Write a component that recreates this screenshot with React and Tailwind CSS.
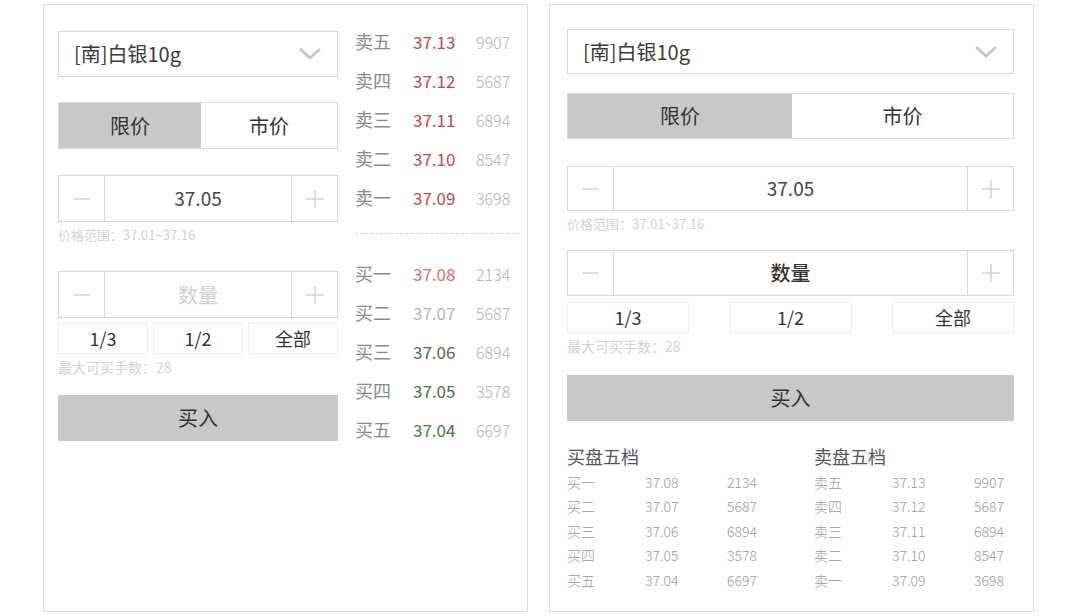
const sells = [
  ["卖五", "37.13", "9907"],
  ["卖四", "37.12", "5687"],
  ["卖三", "37.11", "6894"],
  ["卖二", "37.10", "8547"],
  ["卖一", "37.09", "3698"],
];

const buys = [
  ["买一", "37.08", "2134", "text-[#e06a6a]"],
  ["买二", "37.07", "5687", "text-[#b5b5b5]"],
  ["买三", "37.06", "6894", "text-[#4d6a4f]"],
  ["买四", "37.05", "3578", "text-[#46704c]"],
  ["买五", "37.04", "6697", "text-[#4f7a3c]"],
];

const Chevron = () => (
  <svg width="22" height="12" viewBox="0 0 22 12" fill="none">
    <polyline points="1,1 11,10 21,1" stroke="#c4c4c4" strokeWidth="2.6" />
  </svg>
);

const Minus = () => (
  <svg width="16" height="16" viewBox="0 0 16 16">
    <line x1="0" y1="8" x2="16" y2="8" stroke="#c8c8c8" strokeWidth="1.2" />
  </svg>
);

const Plus = () => (
  <svg width="18" height="18" viewBox="0 0 18 18">
    <line x1="0" y1="9" x2="18" y2="9" stroke="#c8c8c8" strokeWidth="1.2" />
    <line x1="9" y1="0" x2="9" y2="18" stroke="#c8c8c8" strokeWidth="1.2" />
  </svg>
);

const Select = ({ h }) => (
  <div className={`flex items-center justify-between border border-[#d8d8d8] pl-[15px] pr-[16px] ${h}`}>
    <span className="text-[20px] text-[#3a3a3a]">[南]白银10g</span>
    <Chevron />
  </div>
);

const Tabs = ({ h, split }) => (
  <div className={`flex border border-[#d8d8d8] ${h}`}>
    <div className={`flex items-center justify-center bg-[#c8c8c8] text-[20px] text-[#333] ${split}`}>限价</div>
    <div className="flex flex-1 items-center justify-center text-[20px] text-[#333]">市价</div>
  </div>
);

const Stepper = ({ h, children }) => (
  <div className={`flex border border-[#d8d8d8] ${h}`}>
    <div className="flex w-[46px] items-center justify-center border-r border-[#d8d8d8]">
      <Minus />
    </div>
    <div className="flex flex-1 items-center justify-center">{children}</div>
    <div className="flex w-[46px] items-center justify-center border-l border-[#d8d8d8]">
      <Plus />
    </div>
  </div>
);

const Fractions = ({ cls }) => (
  <div className="flex justify-between">
    {["1/3", "1/2", "全部"].map((t) => (
      <div key={t} className={`flex h-[31px] items-center justify-center border border-[#f0f0f0] text-[18px] text-[#333] ${cls}`}>
        {t}
      </div>
    ))}
  </div>
);

export default function App() {
  return (
    <div className="flex h-[616px] w-[1080px] gap-[21px] bg-white pl-[43px] pt-[4px] font-['Noto_Sans_CJK_SC',sans-serif]">
      {/* 左侧面板 */}
      <div className="flex h-[608px] w-[485px] border border-[#dcdcdc] pl-[14px]">
        <div className="flex w-[280px] flex-col pt-[26px]">
          <Select h="h-[46px]" />
          <div className="mt-[25px]">
            <Tabs h="h-[47px]" split="w-[142px]" />
          </div>
          <div className="mt-[26px]">
            <Stepper h="h-[47px]">
              <span className="text-[19px] text-[#444]">37.05</span>
            </Stepper>
          </div>
          <div className="mt-[3px] text-[13px] leading-[20px] text-[#d2d2d2]">价格范围：37.01~37.16</div>
          <div className="mt-[26px]">
            <Stepper h="h-[47px]">
              <span className="text-[20px] text-[#cfcfcf]">数量</span>
            </Stepper>
          </div>
          <div className="mt-[5px]">
            <Fractions cls="w-[90px]" />
          </div>
          <div className="mt-[3px] text-[14px] leading-[20px] text-[#d2d2d2]">最大可买手数：28</div>
          <div className="mt-[18px] flex h-[46px] items-center justify-center bg-[#c8c8c8] text-[20px] text-[#333]">买入</div>
        </div>

        {/* 五档 */}
        <div className="ml-[17px] flex w-[164px] flex-col pt-[17px]">
          {sells.map(([l, p, v]) => (
            <div key={l} className="flex h-[39px] items-center">
              <span className="w-[58px] text-[18px] text-[#8a8a8a]">{l}</span>
              <span className="w-[63px] text-[17px] text-[#bf4747]">{p}</span>
              <span className="text-[16px] font-light text-[#b0b0b0]">{v}</span>
            </div>
          ))}
          <div className="mt-[16px] border-t border-dashed border-[#d0d0d0]" />
          <div className="mt-[20px]">
            {buys.map(([l, p, v, c]) => (
              <div key={l} className="flex h-[39px] items-center">
                <span className="w-[58px] text-[18px] text-[#8a8a8a]">{l}</span>
                <span className={`w-[63px] text-[17px] ${c}`}>{p}</span>
                <span className="text-[16px] font-light text-[#b0b0b0]">{v}</span>
              </div>
            ))}
          </div>
        </div>
      </div>

      {/* 右侧面板 */}
      <div className="flex h-[608px] w-[485px] flex-col border border-[#dcdcdc] pl-[17px] pr-[19px] pt-[24px]">
        <Select h="h-[45px]" />
        <div className="mt-[19px]">
          <Tabs h="h-[46px]" split="w-[224px]" />
        </div>
        <div className="mt-[27px]">
          <Stepper h="h-[45px]">
            <span className="text-[19px] text-[#444]">37.05</span>
          </Stepper>
        </div>
        <div className="mt-[3px] text-[13px] leading-[20px] text-[#d2d2d2]">价格范围：37.01~37.16</div>
        <div className="mt-[16px]">
          <Stepper h="h-[46px]">
            <span className="text-[20px] font-medium text-[#333]">数量</span>
          </Stepper>
        </div>
        <div className="mt-[6px]">
          <Fractions cls="w-[122px]" />
        </div>
        <div className="mt-[3px] text-[14px] leading-[20px] text-[#d2d2d2]">最大可买手数：28</div>
        <div className="mt-[19px] flex h-[46px] items-center justify-center bg-[#c8c8c8] text-[20px] text-[#333]">买入</div>

        <div className="mt-[23px] flex">
          {[
            ["买盘五档", buys],
            ["卖盘五档", sells],
          ].map(([title, rows]) => (
            <div key={title} className="w-[247px] last:w-auto">
              <div className="text-[18px] leading-[24px] text-[#555]">{title}</div>
              <div className="mt-[2px]">
                {rows.map(([l, p, v]) => (
                  <div key={l} className="flex h-[24.5px] items-center text-[14px] font-light text-[#9a9a9a]">
                    <span className="w-[78px]">{l}</span>
                    <span className="w-[82px]">{p}</span>
                    <span>{v}</span>
                  </div>
                ))}
              </div>
            </div>
          ))}
        </div>
      </div>
    </div>
  );
}
